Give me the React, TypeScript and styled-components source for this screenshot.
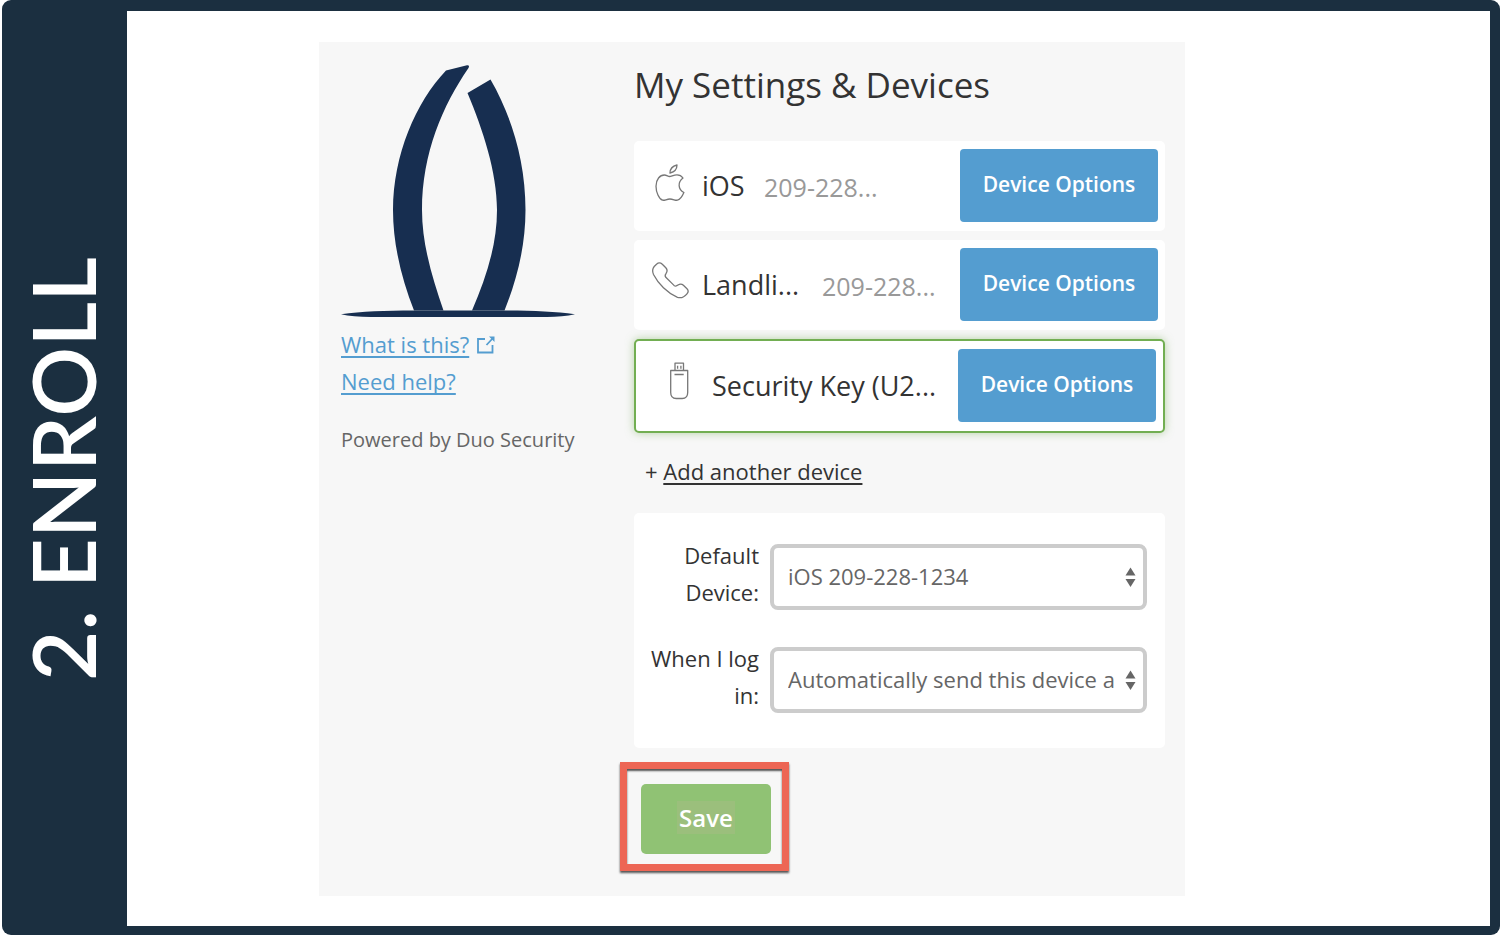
import React from "react";
import styled, { createGlobalStyle } from "styled-components";

const NAVY = "#1b2f40";

const GlobalStyle = createGlobalStyle`
  *, *::before, *::after { box-sizing: border-box; }
  body {
    margin: 0;
    background: #fff;
    color: #333;
    font-family: "Open Sans", "Noto Sans", sans-serif;
    font-size: 22px;
    line-height: 37px;
  }
`;

const Frame = styled.div`
  display: flex;
  min-height: 100vh;
  margin-left: 2px;
  padding: 11px 10px 9px 0;
  background: ${NAVY};
  border-radius: 9px;
`;

const StepRail = styled.aside`
  display: flex;
  flex: 0 0 125px;
  align-items: center;
  justify-content: center;
  padding-right: 4px;
`;

const StepTitle = styled.h1`
  margin: 0;
  writing-mode: vertical-rl;
  transform: rotate(180deg);
  color: #fff;
  font-family: Lato, sans-serif;
  font-size: 87px;
  font-weight: 600;
  line-height: 96px;
  white-space: nowrap;
`;

const Main = styled.main`
  flex: 1;
  min-width: 0;
  padding: 31px 24px 30px 192px;
  background: #fff;
`;

const Panel = styled.section`
  display: grid;
  grid-template-columns: 235px minmax(0, 1fr);
  column-gap: 58px;
  max-width: 866px;
  padding: 23px 20px 42px 22px;
  background: #f7f7f7;
`;

const Brand = styled.div`
  display: flex;
  flex-direction: column;
  align-items: flex-start;
`;

const Logo = styled.svg`
  display: block;
  width: 235px;
  height: 253px;
  margin-bottom: 8px;
`;

const HelpLink = styled.a`
  display: inline-flex;
  align-items: center;
  gap: 8px;
  color: #549dd0;
  text-decoration: none;

  span {
    text-decoration: underline;
    text-decoration-thickness: 2px;
    text-underline-offset: 3px;
    text-decoration-skip-ink: none;
  }
`;

const Powered = styled.p`
  margin: 21px 0 0;
  color: #666;
  font-size: 20px;
  font-weight: 500;
  white-space: nowrap;
`;

const Title = styled.h2`
  margin: 0 0 36px;
  color: #333;
  font-size: 35px;
  font-weight: 400;
  line-height: 40px;
`;

const DeviceList = styled.ul`
  display: grid;
  gap: 9px;
  margin: 0;
  padding: 0;
  list-style: none;
`;

const DeviceRow = styled.li<{ $active?: boolean }>`
  display: flex;
  align-items: center;
  min-height: ${(p) => (p.$active ? 94 : 90)}px;
  padding: 0 7px 2px ${(p) => (p.$active ? 26 : 18)}px;
  background: #fff;
  border: ${(p) => (p.$active ? "2px solid #72ae52" : "0")};
  border-radius: 5px;
  box-shadow: ${(p) => (p.$active ? "0 0 8px rgba(114, 174, 82, 0.5)" : "none")};
`;

const DeviceIcon = styled.svg`
  flex: none;
  width: 37px;
  height: 40px;
  margin-right: 13px;
  overflow: visible;
  fill: none;
  stroke: #777;
  stroke-width: 1.3;
  stroke-linejoin: round;
`;

const DeviceName = styled.span<{ $width?: number }>`
  flex: none;
  width: ${(p) => (p.$width ? p.$width + "px" : "auto")};
  font-size: 27px;
  white-space: nowrap;
`;

const DeviceNumber = styled.span`
  margin: 4px 0 0 17px;
  color: #999;
  font-size: 25px;
  font-weight: 500;
  white-space: nowrap;
`;

const OptionsButton = styled.button`
  flex: none;
  width: 198px;
  height: 73px;
  margin-left: auto;
  padding: 0 0 2px;
  border: 0;
  border-radius: 4px;
  background: #549dd0;
  color: #fff;
  font: inherit;
  font-size: 21px;
  font-weight: 600;
  cursor: pointer;
`;

const AddDevice = styled.p`
  margin: 20px 0 23px 11px;

  a {
    color: #333;
    text-decoration-thickness: 2px;
    text-underline-offset: 3px;
  }
`;

const Preferences = styled.div`
  display: grid;
  row-gap: 29px;
  padding: 24px 18px 34px 16px;
  border-radius: 5px;
  background: #fff;
`;

const Field = styled.div`
  display: grid;
  grid-template-columns: 109px minmax(0, 1fr);
  column-gap: 11px;
  align-items: start;

  label { text-align: right; }
`;

const SelectBox = styled.div`
  position: relative;
  margin-top: 7px;

  svg {
    position: absolute;
    top: 23px;
    right: 11px;
    fill: #666;
    pointer-events: none;
  }
`;

const Select = styled.select`
  display: block;
  width: 100%;
  height: 66px;
  padding: 0 24px 2px 14px;
  appearance: none;
  border: 4px solid #ccc;
  border-radius: 8px;
  background: #fff;
  color: #666;
  font: inherit;
`;

const SaveArea = styled.div`
  position: relative;
  width: 130px;
  margin: 36px 0 0 7px;

  &::before {
    content: "";
    position: absolute;
    inset: -22px -18px -17px -21px;
    border: 7px solid #ed6655;
    box-shadow: 0 2px 2px #555, inset 0 2px 2px #555;
    pointer-events: none;
  }
`;

const SaveButton = styled.button`
  display: block;
  width: 100%;
  height: 70px;
  padding: 0 0 4px;
  border: 0;
  border-radius: 5px;
  background: #90c274;
  color: #fff;
  font: inherit;
  font-size: 24px;
  font-weight: 600;
  cursor: pointer;

  span {
    display: inline-block;
    padding: 0 2px;
    background: #9bbf7c;
    line-height: 33px;
  }
`;

const AppleIcon = () => (
  <DeviceIcon viewBox="0 2 37 40" aria-hidden="true">
    <path d="M18 10c0-4 3-7 7-8 0 4-3 7-7 8z" />
    <path d="M17.500 13.500c2 0 4-1.700 7.500-1.700 2.500 0 4.600 1.200 6 3.200-5.600 4-5 11.500.9 14.500-1.500 3.500-3.700 7-6.500 7.700-2.300.5-4-1.200-7.500-1.200s-5 1.700-7.300 1.200C7 36 4 29 4 23.200c0-7 4-11.200 8.300-11.200 2.300 0 3.700 1.500 5.200 1.500z" />
  </DeviceIcon>
);

const PhoneIcon = () => (
  <DeviceIcon viewBox="0 2 37 40" aria-hidden="true">
    <path d="M2.200 4.500 4.500 2.200c1.800-1.600 4-1.600 5.800 0l3.500 3.600c2 2.200 1.600 3.700.3 5.500-1.300 1.700-1.600 2.300-.3 4L22 23.400c1.500 1.200 2.400 1 4-.3 2-1.500 3.600-1.500 5.400.2l3.600 3.500c1.400 1.500 1.400 3.500 0 5-2.500 3-5.500 4.800-9.500 3.500C15.500 31 6 21.500 1.500 12.500.2 9.500.2 7 2.200 4.500z" />
  </DeviceIcon>
);

const UsbIcon = () => (
  <DeviceIcon viewBox="1 4 37 40" aria-hidden="true">
    <path d="M14 9.500V2.200h8.500v7.300M9.700 9.500h17v22c0 4-2 6-5.500 6h-6c-3.500 0-5.500-2-5.500-6zM13.500 13.500h9.200M16.600 4.800v3M19.900 4.800v3" />
  </DeviceIcon>
);

const ExternalIcon = () => (
  <svg width="18" height="18" viewBox="0 0 18 18" fill="none" stroke="currentColor" strokeWidth="1.8" aria-hidden="true">
    <path d="M8 3H1v13.500h14.500V9M9.500 9 16 2" />
    <path d="M12 0.500h5.500V6z" fill="currentColor" stroke="none" />
  </svg>
);

const SelectArrows = () => (
  <svg width="11" height="20" viewBox="0 0 11 20" aria-hidden="true">
    <path d="M0.500 8.500 5.500 0.500 10.500 8.500zM0.500 12h10L5.500 20z" />
  </svg>
);

export default function App() {
  return (
    <>
      <GlobalStyle />
      <Frame>
        <StepRail>
          <StepTitle>2. ENROLL</StepTitle>
        </StepRail>
        <Main>
          <Panel>
            <Brand>
              <Logo viewBox="0 0 235 253" fill="#172e50" role="img" aria-label="Organization logo">
                <path d="M105 5.500 126 .3Q129 0 127.500 3C102 40 81 88 81 145c0 35 11 70 21.500 100.500H73C61 215 52 180 52 145 52 90 75 37 105 5.500z" />
                <path d="M126.500 28 149.500 14.500C170 50 184.500 95 184.500 145c0 35-8 68-21 100.500H131C145 213 156 180 156 145c0-38-14-80-29.500-117z" />
                <path d="M0 249.200C20 246.500 45 245.500 72 245.500h92c28 0 50 1 70 3.700-8 1.800-18 2.800-28 2.800H30c-12 0-22-1-30-2.800z" />
              </Logo>
              <HelpLink href="#what">
                <span>What is this?</span>
                <ExternalIcon />
              </HelpLink>
              <HelpLink href="#help">
                <span>Need help?</span>
              </HelpLink>
              <Powered>Powered by Duo Security</Powered>
            </Brand>
            <div>
              <Title>My Settings &amp; Devices</Title>
              <DeviceList>
                <DeviceRow>
                  <AppleIcon />
                  <DeviceName $width={45}>iOS</DeviceName>
                  <DeviceNumber>209-228...</DeviceNumber>
                  <OptionsButton type="button">Device Options</OptionsButton>
                </DeviceRow>
                <DeviceRow>
                  <PhoneIcon />
                  <DeviceName $width={103}>Landli...</DeviceName>
                  <DeviceNumber>209-228...</DeviceNumber>
                  <OptionsButton type="button">Device Options</OptionsButton>
                </DeviceRow>
                <DeviceRow $active>
                  <UsbIcon />
                  <DeviceName>Security Key (U2...</DeviceName>
                  <OptionsButton type="button">Device Options</OptionsButton>
                </DeviceRow>
              </DeviceList>
              <AddDevice>
                + <a href="#add">Add another device</a>
              </AddDevice>
              <Preferences>
                <Field>
                  <label htmlFor="default-device">Default Device:</label>
                  <SelectBox>
                    <Select id="default-device">
                      <option>iOS 209-228-1234</option>
                    </Select>
                    <SelectArrows />
                  </SelectBox>
                </Field>
                <Field>
                  <label htmlFor="login-action">When I log in:</label>
                  <SelectBox>
                    <Select id="login-action">
                      <option>Automatically send this device a</option>
                    </Select>
                    <SelectArrows />
                  </SelectBox>
                </Field>
              </Preferences>
              <SaveArea>
                <SaveButton type="button">
                  <span>Save</span>
                </SaveButton>
              </SaveArea>
            </div>
          </Panel>
        </Main>
      </Frame>
    </>
  );
}
